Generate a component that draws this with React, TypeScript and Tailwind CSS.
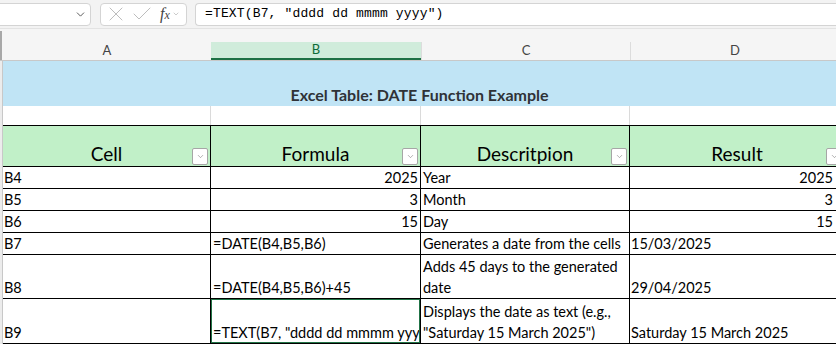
import { X, Check, ChevronDown } from "lucide-react";

const font = "font-['Lato','Liberation_Sans',sans-serif]";

function FilterButton() {
    return (
        <div className="absolute right-[2px] bottom-[1px] w-[16px] h-[17px] bg-white border border-[#a6a6a6] rounded-[2px] flex items-center justify-center">
            <ChevronDown size={9} strokeWidth={1.5} className="text-[#777]" />
        </div>
    );
}

function HeaderCell({ label, w }: { label: string; w: string }) {
    return (
        <div className={`${w} relative h-full border-r border-black flex items-end justify-center shrink-0`}>
            <span className="text-[19px] leading-[24px] text-black">{label}</span>
            <FilterButton />
        </div>
    );
}

type Row = {
    a: string;
    b: string;
    c: string;
    d: string;
    bRight?: boolean;
    dRight?: boolean;
    wrap?: boolean;
    h: string;
    selected?: boolean;
};

const rows: Row[] = [
    { a: "B4", b: "2025", c: "Year", d: "2025", bRight: true, dRight: true, h: "h-[22px]" },
    { a: "B5", b: "3", c: "Month", d: "3", bRight: true, dRight: true, h: "h-[22px]" },
    { a: "B6", b: "15", c: "Day", d: "15", bRight: true, dRight: true, h: "h-[22px]" },
    { a: "B7", b: "=DATE(B4,B5,B6)", c: "Generates a date from the cells", d: "15/03/2025", h: "h-[22px]" },
    { a: "B8", b: "=DATE(B4,B5,B6)+45", c: "Adds 45 days to the generated date", d: "29/04/2025", wrap: true, h: "h-[44px]" },
    {
        a: "B9",
        b: '=TEXT(B7, "dddd dd mmmm yyyy")',
        c: 'Displays the date as text (e.g., "Saturday 15 March 2025")',
        d: "Saturday 15 March 2025",
        wrap: true,
        h: "h-[45px]",
        selected: true,
    },
];

export default function App() {
    return (
        <div className={`w-[836px] h-[344px] overflow-hidden bg-white ${font}`}>
            {/* Formula bar */}
            <div className="h-[29px] bg-[#f3f3f3] flex items-center border-b border-[#e3e3e3]">
                <div className="-ml-[6px] w-[97px] h-[23px] bg-white border border-[#d4d4d4] rounded-[4px] flex items-center justify-end pr-[3px] shrink-0">
                    <ChevronDown size={13} strokeWidth={1.6} className="text-[#444]" />
                </div>
                <div className="ml-[9px] w-[87px] h-[23px] bg-white border border-[#d4d4d4] rounded-[4px] flex items-center pl-[3px] gap-[2px] shrink-0">
                    <X size={24} strokeWidth={0.9} className="text-[#b5b5b5]" />
                    <Check size={24} strokeWidth={0.9} className="text-[#b5b5b5]" />
                    <div className="ml-[4px] flex items-center gap-[2px]">
                        <span className="font-['Liberation_Serif',serif] italic text-[16px] leading-none text-[#444]">
                            f<span className="text-[12px]">x</span>
                        </span>
                        <ChevronDown size={8} strokeWidth={1.5} className="text-[#999]" />
                    </div>
                </div>
                <div className="ml-[8px] flex-1 h-[23px] bg-white border border-r-0 border-[#d4d4d4] rounded-l-[4px] flex items-center pl-[9px]">
                    <span className="font-['Liberation_Mono',monospace] text-[13px] tracking-[0.15px] text-black whitespace-pre">
                        =TEXT(B7, "dddd dd mmmm yyyy")
                    </span>
                </div>
            </div>

            {/* Column letters */}
            <div className="h-[32px] bg-[#f5f5f5] flex border-b border-[#c8c8c8]">
                <div className="w-[3px] shrink-0 mt-[2px] border-l-[2px] border-[#a8a8a8]" />
                <div className="flex flex-1 items-end">
                    <div className="w-[208px] h-[18px] flex items-center justify-center text-[13px] text-[#444] shrink-0">
                        A
                    </div>
                    <div className="w-[210px] h-[18px] flex items-center justify-center text-[13px] text-[#0f6a38] bg-[#d0ecdb] border-b-2 border-[#1e7145] shrink-0">
                        B
                    </div>
                    <div className="w-[209px] h-[18px] flex items-center justify-center text-[13px] text-[#444] border-l border-[#dcdcdc] shrink-0">
                        C
                    </div>
                    <div className="w-[209px] h-[18px] flex items-center justify-center text-[13px] text-[#444] border-l border-[#dcdcdc] shrink-0">
                        D
                    </div>
                </div>
            </div>

            <div className="flex">
                <div className="w-[3px] shrink-0 bg-[#ececec] border-r border-[#c8c8c8]" />
                <div className="flex-1 overflow-hidden">
                    {/* Title */}
                    <div className="h-[45px] bg-[#c0e4f5] flex items-end justify-center pb-[1px]">
                        <span className="text-[16px] font-bold text-[#2f3237] leading-[20px]">
                            Excel Table: DATE Function Example
                        </span>
                    </div>

                    {/* Empty row */}
                    <div className="h-[19px] flex">
                        <div className="w-[208px] border-r border-[#dadada] shrink-0" />
                        <div className="w-[210px] border-r border-[#dadada] shrink-0" />
                        <div className="w-[209px] border-r border-[#dadada] shrink-0" />
                    </div>

                    {/* Header */}
                    <div className="h-[42px] flex bg-[#c1f0c8] border-y border-black">
                        <HeaderCell label="Cell" w="w-[208px]" />
                        <HeaderCell label="Formula" w="w-[210px]" />
                        <HeaderCell label="Descritpion" w="w-[209px]" />
                        <HeaderCell label="Result" w="w-[215px]" />
                    </div>

                    {/* Data */}
                    {rows.map((r) => (
                        <div key={r.a} className={`${r.h} flex border-b border-black text-[14.5px] text-black`}>
                            <div className="w-[208px] border-r border-black flex items-end px-[1px] leading-[20px] shrink-0">
                                {r.a}
                            </div>
                            <div
                                className={`relative w-[210px] border-r border-black flex items-end px-[2px] leading-[20px] shrink-0 overflow-hidden whitespace-nowrap ${
                                    r.bRight ? "justify-end" : ""
                                }`}
                            >
                                {r.b}
                                {r.selected && (
                                    <div className="absolute z-10 -left-[1px] -top-[1px] -right-[1px] -bottom-[1px] border-2 border-[#217346]" />
                                )}
                            </div>
                            <div
                                className={`w-[209px] border-r border-black flex items-end px-[2px] leading-[21px] shrink-0 ${
                                    r.wrap ? "" : "whitespace-nowrap"
                                }`}
                            >
                                <span>{r.c}</span>
                            </div>
                            <div
                                className={`w-[204px] flex items-end px-[1px] leading-[20px] shrink-0 ${
                                    r.dRight ? "justify-end" : ""
                                }`}
                            >
                                {r.d}
                            </div>
                        </div>
                    ))}
                </div>
            </div>
        </div>
    );
}
